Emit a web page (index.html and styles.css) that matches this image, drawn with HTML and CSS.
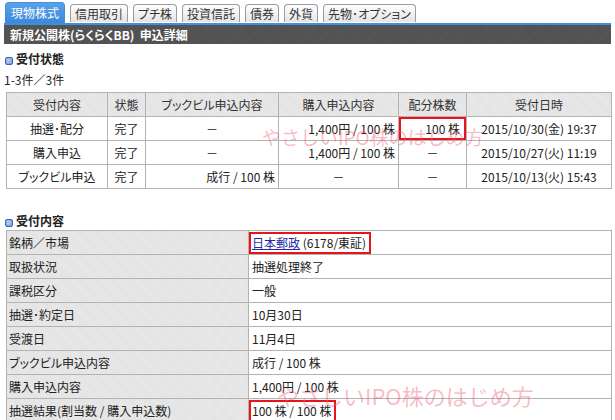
FILE: index.html
```html
<!DOCTYPE html>
<html lang="ja">
<head>
<meta charset="utf-8">
<link rel="stylesheet" href="styles.css">
</head>
<body>
<div class="page">
  <div class="tabs">
    <span class="tab active">現物株式</span>
    <span class="tab">信用取引</span>
    <span class="tab">プチ株</span>
    <span class="tab">投資信託</span>
    <span class="tab">債券</span>
    <span class="tab">外貨</span>
    <span class="tab">先物･オプション</span>
  </div>
  <div class="titlebar">新規公開株(らくらくBB)&nbsp; 申込詳細</div>

  <h2 class="sec"><span class="ico"></span>受付状態</h2>
  <div class="count">1-3件／3件</div>
  <table class="t1">
    <colgroup>
      <col class="c1"><col class="c2"><col class="c3"><col class="c4"><col class="c5"><col class="c6">
    </colgroup>
    <tr class="head">
      <th>受付内容</th><th>状態</th><th>ブックビル申込内容</th><th>購入申込内容</th><th>配分株数</th><th>受付日時</th>
    </tr>
    <tr>
      <td class="ctr">抽選･配分</td><td class="ctr">完了</td><td class="ctr">－</td><td class="rt">1,400円 / 100 株</td><td class="rt boxed">100 株</td><td class="ctr">2015/10/30(金) 19:37</td>
    </tr>
    <tr>
      <td class="ctr">購入申込</td><td class="ctr">完了</td><td class="ctr">－</td><td class="rt">1,400円 / 100 株</td><td class="ctr">－</td><td class="ctr">2015/10/27(火) 11:19</td>
    </tr>
    <tr>
      <td class="ctr">ブックビル申込</td><td class="ctr">完了</td><td class="rt">成行 / 100 株</td><td class="ctr">－</td><td class="ctr">－</td><td class="ctr">2015/10/13(火) 15:43</td>
    </tr>
  </table>

  <h2 class="sec sec2"><span class="ico"></span>受付内容</h2>
  <table class="t2">
    <colgroup><col class="k"><col class="v"></colgroup>
    <tr><th>銘柄／市場</th><td class="hlcell"><span class="hl"><a href="#" class="lnk">日本郵政</a> (6178/東証)</span></td></tr>
    <tr><th>取扱状況</th><td>抽選処理終了</td></tr>
    <tr><th>課税区分</th><td>一般</td></tr>
    <tr><th>抽選･約定日</th><td>10月30日</td></tr>
    <tr><th>受渡日</th><td>11月4日</td></tr>
    <tr><th>ブックビル申込内容</th><td>成行 / 100 株</td></tr>
    <tr><th>購入申込内容</th><td>1,400円 / 100 株</td></tr>
    <tr><th>抽選結果(割当数 / 購入申込数)</th><td class="hlcell"><span class="hl">100 株 / 100 株</span></td></tr>
  </table>

  <div class="wm wm1">やさしいIPO株のはじめ方</div>
  <div class="wm wm2">やさしいIPO株のはじめ方</div>
</div>
</body>
</html>
```

FILE: styles.css
```css
html, body {
  margin: 0;
  padding: 0;
  background: #fff;
}
body {
  font-family: "Noto Sans CJK JP", "Liberation Sans", sans-serif;
  font-size: 12px;
  color: #222;
  font-feature-settings: "palt";
}
.page {
  position: relative;
  width: 607px;
  padding: 3px 4px 0 4px;
}
.tabs {
  display: flex;
  align-items: flex-end;
  gap: 5px;
  height: 20px;
  padding-left: 1px;
}
.tab {
  height: 17px;
  line-height: 17px;
  padding: 0 4px;
  border: 1px solid #9c9c9c;
  border-bottom: none;
  border-radius: 4px 4px 0 0;
  background: linear-gradient(#ffffff, #e4e4e4);
  color: #333;
  font-size: 12px;
  margin-bottom: 1px;
  white-space: nowrap;
}
.tab.active {
  height: 20px;
  line-height: 20px;
  margin-bottom: 0;
  border-color: #3f8fdf;
  background: linear-gradient(#5aa2ea, #3a88d8);
  color: #fff;
  padding: 0 5px;
}
.titlebar {
  border-top: 2px solid #3f8fdf;
  height: 19px;
  line-height: 19px;
  padding-left: 6px;
  background: #555 repeating-linear-gradient(135deg, #575757 0 1px, #515151 1px 3px);
  color: #fff;
  font-weight: bold;
  font-size: 12px;
}
.sec {
  margin: 8px 0 0 0;
  display: flex;
  align-items: center;
  gap: 3px;
  height: 14px;
  line-height: 14px;
  font-size: 12px;
  font-weight: bold;
  color: #222;
  padding-left: 1px;
}
.sec2 {
  margin-top: 25px;
}
.ico {
  display: inline-block;
  width: 6px;
  height: 6px;
  border-radius: 2px;
  border: 1px solid #3d63b8;
  background: radial-gradient(circle at 40% 40%, #b8d0f5, #6d95de);
  margin-top: 3px;
}
.count {
  margin-top: 7px;
  height: 14px;
  line-height: 14px;
}
table {
  border-collapse: collapse;
  table-layout: fixed;
  margin-left: 2px;
  width: 605px;
}
.t1 {
  margin-top: 5px;
}
.t2 {
  margin-top: 2px;
}
col.c1 { width: 101px; }
col.c2 { width: 38px; }
col.c3 { width: 133px; }
col.c4 { width: 120px; }
col.c5 { width: 68px; }
col.c6 { width: 145px; }
col.k { width: 242px; }
col.v { width: 363px; }
th, td {
  border: 1px solid #b3b3b3;
  height: 23px;
  padding: 0 3px;
  font-weight: normal;
  font-size: 12px;
  line-height: 16px;
  white-space: nowrap;
  overflow: hidden;
}
.t1 th {
  text-align: center;
  color: #333;
  background: #e6e6e6 repeating-linear-gradient(45deg, #e9e9e9 0 1px, #e2e2e2 1px 2px);
}
.t2 th {
  text-align: left;
  padding-left: 2px;
  color: #222;
  background: #e6e6e6 repeating-linear-gradient(45deg, #e9e9e9 0 1px, #e2e2e2 1px 2px);
}
.t2 td {
  padding-left: 3px;
}
.ctr { text-align: center; }
.rt { text-align: right; }
.boxed {
  box-shadow: inset 0 0 0 2px #e8141b;
  padding-right: 6px;
}
.t2 td.hlcell {
  padding: 0;
}
.hl {
  display: inline-block;
  border: 2px solid #e8141b;
  height: 18px;
  line-height: 18px;
  padding: 0 3px 0 1px;
  vertical-align: middle;
}
.lnk {
  color: #1d2aa8;
  text-decoration: underline;
}
.wm {
  position: absolute;
  color: rgba(240, 92, 116, 0.42);
  white-space: nowrap;
  pointer-events: none;
  font-family: "Noto Sans CJK JP", sans-serif;
  font-feature-settings: normal;
  line-height: 1;
}
.wm1 {
  left: 262px;
  top: 127px;
  font-size: 19px;
}
.wm2 {
  left: 277px;
  top: 384px;
  font-size: 22px;
}
```
